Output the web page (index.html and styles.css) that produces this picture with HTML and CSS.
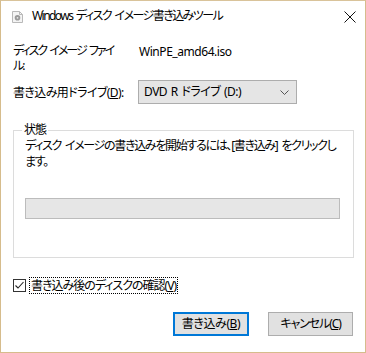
FILE: index.html
```html
<!DOCTYPE html>
<html lang="ja">
<head>
<meta charset="utf-8">
<link rel="stylesheet" href="styles.css">
</head>
<body>
<div class="window">
  <div class="titlebar">
    <svg class="appicon" width="11" height="12" viewBox="0 0 11 12">
      <path d="M0.5 0.5 H7.5 L10.5 3.5 V11.5 H0.5 Z" fill="#f4f4f4" stroke="#b9b9b9"/>
      <path d="M7.5 0.5 V3.5 H10.5" fill="none" stroke="#b9b9b9"/>
      <circle cx="5.5" cy="6.8" r="2.8" fill="#9a9a9a"/>
      <circle cx="5.5" cy="6.8" r="0.9" fill="#e8e8e8"/>
    </svg>
    <div class="title">Windows ディスク イメージ書き込みツール</div>
    <svg class="close" width="12" height="12" viewBox="0 0 12 12">
      <path d="M0.5 0.5 L11.5 11.5 M11.5 0.5 L0.5 11.5" stroke="#111" stroke-width="1"/>
    </svg>
  </div>
  <div class="content">
    <div class="form">
      <div class="label wrap">ディスク イメージ ファイ<br>ル:</div>
      <div class="value">WinPE_amd64.iso</div>
      <div class="label drive">書き込み用ドライブ(<u>D</u>):</div>
      <div class="combo">
        <span>DVD R ドライブ (D:)</span>
        <svg width="9" height="5" viewBox="0 0 9 5"><path d="M0.5 0.5 L4.5 4.5 L8.5 0.5" fill="none" stroke="#555"/></svg>
      </div>
    </div>
    <fieldset class="group">
      <legend>状態</legend>
      <p class="status">ディスク イメージの書き込みを開始するには、[書き込み] をクリックし<br>ます。</p>
      <div class="progress"></div>
    </fieldset>
    <div class="checkrow">
      <span class="checkbox">
        <svg width="11" height="11" viewBox="0 0 11 11"><path d="M1.5 5.5 L4 8 L9.5 2" fill="none" stroke="#222" stroke-width="1.1"/></svg>
      </span>
      <span class="checklabel">書き込み後のディスクの確認(<u>V</u>)</span>
    </div>
    <div class="buttons">
      <button class="btn primary">書き込み(<u>B</u>)</button>
      <button class="btn cancel">キャンセル(<u>C</u>)</button>
    </div>
  </div>
</div>
</body>
</html>
```
FILE: styles.css
```css
* { box-sizing: border-box; }
html, body { margin: 0; padding: 0; background: #fff; }
body {
  font-family: "Noto Sans", "Noto Sans CJK JP", sans-serif;
  font-size: 12px;
  color: #000;
  font-feature-settings: "palt";
  letter-spacing: -1px;
  word-spacing: 2px;
}
.window {
  width: 366px;
  height: 353px;
  border: 1px solid #d6bc8c;
  border-top-color: #d9c39a;
  background: #fff;
  display: flex;
  flex-direction: column;
}
.titlebar {
  height: 30px;
  display: flex;
  align-items: center;
  padding-left: 11px;
  padding-right: 9px;
}
.appicon { flex: none; margin-top: 1px; }
.title {
  margin-left: 9px;
  flex: 1;
  line-height: 16px;
  letter-spacing: -1.55px;
}
.close { flex: none; margin-top: 1px; }
.content {
  padding: 12px 12px 0 12px;
  display: flex;
  flex-direction: column;
}
.form {
  display: grid;
  grid-template-columns: 125px 1fr;
  row-gap: 7px;
  align-items: center;
}
.label.wrap {
  line-height: 15px;
  white-space: nowrap;
  align-self: start;
  letter-spacing: -2px;
}
.label.drive { letter-spacing: -0.6px; }
.value {
  align-self: start;
  line-height: 15px;
  padding-left: 1px;
  padding-top: 1px;
  letter-spacing: -0.45px;
}
.combo {
  width: 159px;
  height: 24px;
  background: #e5e5e5;
  border: 1px solid #adadad;
  display: flex;
  align-items: center;
  justify-content: space-between;
  padding: 0 7px 0 5px;
}
.combo span { line-height: 16px; letter-spacing: -0.5px; word-spacing: 1px; }
u { text-decoration: underline; text-underline-offset: 1px; }
.group {
  margin: 19px 0 0 0;
  padding: 0 12px 0 11px;
  height: 135px;
  border: 1px solid #dcdcdc;
  width: 341px;
}
.group legend {
  padding: 0 2px;
  margin-left: -3px;
  line-height: 14px;
}
.status {
  margin: 1px 0 0 0;
  line-height: 16px;
  white-space: nowrap;
  letter-spacing: -1.3px;
}
.progress {
  margin-top: 28px;
  height: 21px;
  width: 315px;
  background: #e6e6e6;
  border: 1px solid #bcbcbc;
}
.checkrow {
  margin-top: 19px;
  display: flex;
  align-items: center;
}
.checkbox {
  width: 13px;
  height: 13px;
  border: 1px solid #333;
  display: flex;
  align-items: center;
  justify-content: center;
  background: #fff;
}
.checklabel {
  margin-left: 3px;
  border: 1px dotted #000;
  padding: 0 1px;
  line-height: 15px;
  letter-spacing: -1px;
}
.buttons {
  margin-top: 18px;
  display: flex;
  justify-content: flex-end;
  gap: 19px;
}
.btn {
  font: inherit;
  font-feature-settings: "palt";
  height: 24px;
  background: #e1e1e1;
  border: 1px solid #adadad;
  color: #000;
  padding: 0;
  line-height: 16px;
}
.btn.primary {
  border: 2px solid #0078d7;
  width: 76px;
  letter-spacing: -0.4px;
}
.btn.cancel { width: 85px; letter-spacing: -1.1px; }
```
